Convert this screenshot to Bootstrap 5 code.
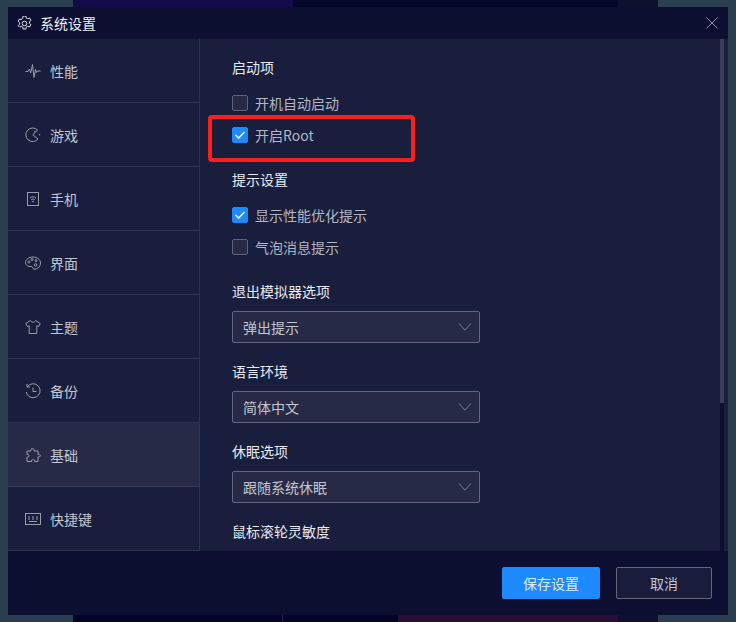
<!DOCTYPE html>
<html lang="zh-CN">
<head>
  <meta charset="UTF-8" />
  <title>系统设置</title>
  <link href="https://cdn.jsdelivr.net/npm/bootstrap@5.3.0/dist/css/bootstrap.min.css" rel="stylesheet">
  <style>
    html, body { height: 100%; overflow: hidden; }
    body {
      font-family: "Noto Sans CJK SC", "Liberation Sans", sans-serif;
      background-color: #2b3e50;
      font-size: 14px;
      padding: 7px 8px;
    }
    /* emulator desktop showing above and below the dialog */
    .backdrop {
      position: absolute;
      left: 73px; width: 585px; top: 0; bottom: 0;
      background:
        linear-gradient(90deg, #140a4a 220px, #04062a 220px, #04062a 545px, #0e1030 545px) top / 100% 7px no-repeat,
        linear-gradient(90deg, #04042a 209px, #1c2060 209px, #1c2060 210px, #04042a 210px, #04042a 325px, #2a0c35 325px, #2a0c35 545px, #0e1030 545px) bottom / 100% 7px no-repeat;
    }
    .settings-win {
      position: relative;
      height: 608px;
      background: #0c0f30;
    }
    .win-head { height: 32px; padding: 0 10px 0 9px; color: #eef0f6; font-size: 14px; }
    .win-body { height: 512px; background: #1a1e3d; }
    .side-menu { width: 192px; border-right: 1px solid #2f3350; }
    .side-item {
      height: 64px;
      padding: 1px 0 0 17px;
      color: #c3c5d0;
      border-bottom: 1px solid #2f3350;
    }
    .side-item.active { background: #272a47; border-bottom-color: #3a3d58; }
    .side-item svg { width: 16px; height: 16px; margin-right: 9px; }
    .ico { fill: none; stroke: #9a9cab; stroke-width: 1; }
    .pane { padding: 20px 0 0 32px; overflow: hidden; }
    .pane-scroll { width: 4px; margin: 0 4px 0 0; background: #0c0f30; }
    .pane-thumb { height: 364px; background: #3a3d5a; }
    .group-title { color: #e8eaf2; line-height: 16px; margin-bottom: 20px; height: 16px; }
    .group-title.spaced { margin-top: 28px; }
    .group-title.field { margin-bottom: 12px; }
    .opt { height: 16px; color: #b4b6c3; margin-bottom: 16px; }
    .opt.last { margin-bottom: 0; }
    .tick {
      width: 16px; height: 16px; margin-right: 7px;
      background: #272a47; border: 1px solid #5f6278; border-radius: 2px;
    }
    .tick.on { background: #1e8aff; border-color: #1e8aff; }
    .tick svg { width: 14px; height: 14px; }
    .pick {
      width: 248px; height: 32px;
      background: #272a47;
      border: 1px solid #63667c;
      border-radius: 2px;
      padding: 0 6px 0 10px;
      color: #c3c5d0;
      margin-bottom: 20px;
    }
    .pick svg { width: 16px; height: 10px; }
    .win-foot { height: 64px; padding: 16px 16px 0 0; }
    .act { width: 96px; height: 32px; border-radius: 2px; font-size: 14px; padding: 0; }
    .act-save { width: 98px; background: #1e8aff; border: 0; color: #dcebff; margin-right: 16px; }
    .act-cancel { background: #1a1c3c; border: 1px solid #63667c; color: #c3c5d0; }
    .redbox {
      position: absolute;
      left: 200px; top: 108px;
      width: 207px; height: 47px;
      border: 4px solid #ff1f1a;
      border-radius: 4px;
    }
  </style>
</head>
<body>
  <div class="backdrop"></div>

  <div class="settings-win d-flex flex-column">
    <div class="win-head d-flex align-items-center">
      <svg class="me-2" width="15" height="15" viewBox="1 1 14 15" fill="none" stroke="#e4e6ee" stroke-width="1">
        <path d="M6.6 1h2.8l.4 2 1.3.7 1.9-.7 1.4 2.4-1.5 1.3v1.6l1.5 1.3-1.4 2.4-1.9-.7-1.3.7-.4 2H6.6l-.4-2-1.300-.7-1.900.7L1.600 10.600l1.500-1.300V7.700L1.600 6.400 3 4l1.900.7L6.200 3z"/>
        <circle cx="8" cy="8.500" r="2.300"/>
      </svg>
      <span>系统设置</span>
      <svg class="ms-auto" width="12" height="12" viewBox="0 0 12 12" stroke="#8f91a3" stroke-width="1"><path d="M.5.5l11 11M11.500.5l-11 11"/></svg>
    </div>

    <div class="win-body d-flex">
      <div class="side-menu flex-shrink-0">
        <div class="side-item d-flex align-items-center">
          <svg class="ico" viewBox="0 0 16 16"><path d="M.5 8.500h2.500L4.500 6l1.200 4L7.500 1.500 9 14.500l1.500-8 1 3 1-1.500h3"/></svg><span>性能</span>
        </div>
        <div class="side-item d-flex align-items-center">
          <svg class="ico" viewBox="0 0 16 16"><path d="M12.500 3A6.800 6.800 0 1 0 13 12L7.800 7.800z"/><circle cx="9.800" cy="4.800" r=".4"/><circle cx="14.500" cy="7.800" r=".4"/></svg><span>游戏</span>
        </div>
        <div class="side-item d-flex align-items-center">
          <svg class="ico" viewBox="0 0 16 16"><rect x="2.500" y="1.500" width="11" height="13"/><path d="M5 7c1.800-1.500 4.200-1.500 6 0M6.300 8.700c1-.8 2.400-.8 3.400 0"/><circle cx="8" cy="10.500" r=".5"/></svg><span>手机</span>
        </div>
        <div class="side-item d-flex align-items-center">
          <svg class="ico" viewBox="0 0 16 16"><path d="M8 2C3.800 2 .5 4.600.5 7.500S3.500 12 6 11.500c1.500-.3 1.500 1 2 2 .7 1.200 3 .8 5-.5 1.700-1.100 2.500-3 2.500-5C15.500 4.600 12.200 2 8 2z"/><circle cx="4" cy="7" r="1"/><circle cx="7" cy="4.500" r="1"/><circle cx="11" cy="5.500" r="1"/><circle cx="10.500" cy="10" r="1.300"/></svg><span>界面</span>
        </div>
        <div class="side-item d-flex align-items-center">
          <svg class="ico" viewBox="0 0 16 16"><path d="M5.500 1.500L.8 4.500l1.500 3 1.900-.8v7.800h7.600V6.700l1.900.8 1.500-3-4.700-3c-.5 2.300-4.500 2.300-5 0z"/></svg><span>主题</span>
        </div>
        <div class="side-item d-flex align-items-center">
          <svg class="ico" viewBox="0 0 16 16"><path d="M2.300 3.800A7 7 0 1 1 1.200 9M2 1v3h3M8 4.500V8.500h3.500"/></svg><span>备份</span>
        </div>
        <div class="side-item active d-flex align-items-center">
          <svg class="ico" viewBox="0 0 16 16"><path d="M6 4C4.500 1 10.500 1 9 4h4v3.500c3-1.500 3 3.500 0 2.300v4.700H9.500c1-2.500-4-2.500-3 0H2V10c2.500 1 2.500-3.500 0-2.500V4z"/></svg><span>基础</span>
        </div>
        <div class="side-item d-flex align-items-center">
          <svg class="ico" viewBox="0 0 16 16"><rect x=".5" y="2.500" width="15" height="11"/><path d="M3 6h2M7 6h2M11 6h2M3 8h2M7 8h2M11 8h2M4 10.500h8"/></svg><span>快捷键</span>
        </div>
      </div>

      <div class="pane flex-grow-1">
        <div class="group-title">启动项</div>
        <div class="opt d-flex align-items-center"><span class="tick"></span><span>开机自动启动</span></div>
        <div class="opt last d-flex align-items-center"><span class="tick on d-flex align-items-center justify-content-center"><svg viewBox="0 0 14 14" fill="none" stroke="#fff" stroke-width="1.300"><path d="M2.500 7l3.200 3 5.800-6"/></svg></span><span>开启Root</span></div>
        <div class="group-title spaced">提示设置</div>
        <div class="opt d-flex align-items-center"><span class="tick on d-flex align-items-center justify-content-center"><svg viewBox="0 0 14 14" fill="none" stroke="#fff" stroke-width="1.300"><path d="M2.500 7l3.200 3 5.800-6"/></svg></span><span>显示性能优化提示</span></div>
        <div class="opt last d-flex align-items-center"><span class="tick"></span><span>气泡消息提示</span></div>
        <div class="group-title field spaced">退出模拟器选项</div>
        <div class="pick d-flex align-items-center justify-content-between"><span>弹出提示</span><svg viewBox="0 0 16 10" fill="none" stroke="#696c80" stroke-width="1.100"><path d="M2 1.500l6 6.500 6-6.500"/></svg></div>
        <div class="group-title field">语言环境</div>
        <div class="pick d-flex align-items-center justify-content-between"><span>简体中文</span><svg viewBox="0 0 16 10" fill="none" stroke="#696c80" stroke-width="1.100"><path d="M2 1.500l6 6.500 6-6.500"/></svg></div>
        <div class="group-title field">休眠选项</div>
        <div class="pick d-flex align-items-center justify-content-between"><span>跟随系统休眠</span><svg viewBox="0 0 16 10" fill="none" stroke="#696c80" stroke-width="1.100"><path d="M2 1.500l6 6.500 6-6.500"/></svg></div>
        <div class="group-title">鼠标滚轮灵敏度</div>
      </div>

      <div class="pane-scroll flex-shrink-0"><div class="pane-thumb"></div></div>
    </div>

    <div class="win-foot d-flex justify-content-end">
      <button class="btn act act-save">保存设置</button>
      <button class="btn act act-cancel">取消</button>
    </div>

    <div class="redbox"></div>
  </div>

  <script src="https://cdn.jsdelivr.net/npm/bootstrap@5.3.0/dist/js/bootstrap.bundle.min.js"></script>
</body>
</html>
